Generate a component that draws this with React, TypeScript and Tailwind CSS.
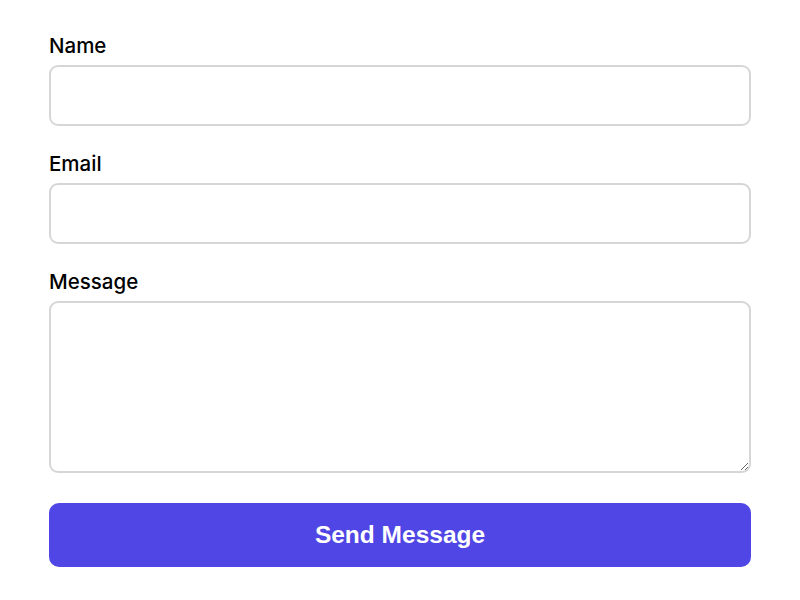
import React from "react";

export default function App() {
  const label = "block text-[20.5px] leading-[28px] font-medium text-black mb-[5px]";
  const field =
    "block w-full rounded-[9px] border-2 border-[#d6d6d6] bg-white outline-none";
  return (
    <div
      className="min-h-[600px] w-full bg-white px-[49px] pt-[32px]"
      style={{ fontFamily: "Inter, 'Noto Sans', sans-serif" }}
    >
      <form className="flex flex-col" onSubmit={(e) => e.preventDefault()}>
        <label className={label}>Name</label>
        <input type="text" className={`${field} h-[61px]`} />
        <label className={`${label} mt-[24px]`}>Email</label>
        <input type="email" className={`${field} h-[61px]`} />
        <label className={`${label} mt-[24px]`}>Message</label>
        <textarea className={`${field} h-[172px] resize-y`} />
        <button
          type="submit"
          className="mt-[30px] h-[64px] w-full rounded-[10px] bg-[#4f46e5] text-[24.5px] font-bold text-white"
          style={{ fontFamily: "'Liberation Sans', Arial, sans-serif" }}
        >
          Send Message
        </button>
      </form>
    </div>
  );
}
